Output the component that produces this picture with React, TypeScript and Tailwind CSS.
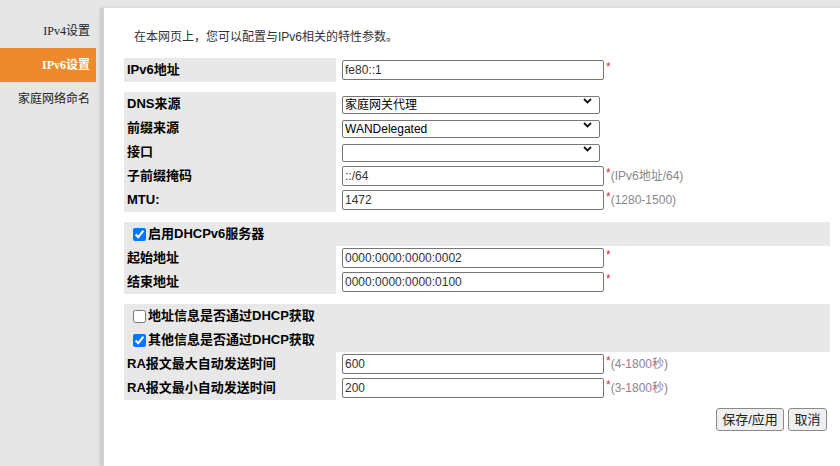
import React from 'react';

const labelCls =
  'w-[212px] shrink-0 bg-[#e8e8e8] pl-[3px] flex items-center font-bold text-[13px] text-black';

function Row({ label, children }: { label: string; children?: React.ReactNode }) {
  return (
    <div className="flex h-[24px]">
      <div className={labelCls}>{label}</div>
      <div className="flex items-center pl-[6px]">{children}</div>
    </div>
  );
}

function TextField({ value, hint, req = true }: { value: string; hint?: string; req?: boolean }) {
  return (
    <>
      <input
        defaultValue={value}
        className="w-[262px] h-[20px] border border-[#767676] rounded-[2px] bg-white pl-[2px] text-[12px] text-[#333] outline-none"
      />
      {req && <span className="ml-[2px] text-[12px] text-[#c33] self-start mt-[3px] leading-[12px]">*</span>}
      {hint && <span className="text-[12px] text-[#888]">{hint}</span>}
    </>
  );
}

function Select({ value }: { value: string }) {
  return (
    <div className="relative">
      <select
        defaultValue={value}
        className="appearance-none w-[258px] h-[18px] border border-[#767676] rounded-[2px] bg-white pl-[2px] text-[12px] leading-[16px] text-black outline-none"
      >
        <option value={value}>{value}</option>
      </select>
      <svg
        className="absolute right-[8px] top-[6px] pointer-events-none"
        width="9"
        height="6"
        viewBox="0 0 9 6"
      >
        <path d="M1 1 L4.5 4.5 L8 1" fill="none" stroke="#111" strokeWidth="1.8" />
      </svg>
    </div>
  );
}

function CheckRow({ label, checked }: { label: string; checked: boolean }) {
  return (
    <div className="flex items-center h-[24px] bg-[#e8e8e8] pl-[9px] gap-[2px] font-bold text-[13px] text-black">
      <input type="checkbox" defaultChecked={checked} className="w-[13px] h-[13px] m-0 accent-[#0075ff]" />
      <span>{label}</span>
    </div>
  );
}

export default function App() {
  const navItems = ['IPv4设置', 'IPv6设置', '家庭网络命名'];
  return (
    <div className="w-[840px] h-[466px] flex bg-[#e6e6e6] font-['Liberation_Sans','Noto_Sans_CJK_SC',sans-serif] overflow-hidden">
      {/* side menu */}
      <div className="w-[100px] shrink-0 pt-[14px] font-['Liberation_Serif','Noto_Sans_CJK_SC',serif] text-[12px]">
        {navItems.map((n, i) => (
          <div
            key={n}
            className={`w-[96px] h-[34px] flex items-center justify-end pr-[6px] ${
              i === 1 ? 'bg-[#ee8a2c] text-white font-bold' : 'text-[#222]'
            }`}
          >
            {n}
          </div>
        ))}
      </div>

      {/* content panel */}
      <div className="flex-1 mt-[8px] bg-white border-l-[4px] border-l-[#d0d0d0] shadow-[0_0_3px_rgba(0,0,0,0.12)] pt-[20px] pl-[20px] pr-[10px]">
        <div className="pl-[10px] text-[12px] leading-[18px] text-[#333] mb-[12px]">
          在本网页上，您可以配置与IPv6相关的特性参数。
        </div>

        <div className="flex flex-col gap-[10px]">
          <div>
            <Row label="IPv6地址">
              <TextField value="fe80::1" />
            </Row>
          </div>

          <div>
            <Row label="DNS来源">
              <Select value="家庭网关代理" />
            </Row>
            <Row label="前缀来源">
              <Select value="WANDelegated" />
            </Row>
            <Row label="接口">
              <Select value="" />
            </Row>
            <Row label="子前缀掩码">
              <TextField value="::/64" hint="(IPv6地址/64)" />
            </Row>
            <Row label="MTU:">
              <TextField value="1472" hint="(1280-1500)" />
            </Row>
          </div>

          <div>
            <CheckRow label="启用DHCPv6服务器" checked />
            <Row label="起始地址">
              <TextField value="0000:0000:0000:0002" />
            </Row>
            <Row label="结束地址">
              <TextField value="0000:0000:0000:0100" />
            </Row>
          </div>

          <div>
            <CheckRow label="地址信息是否通过DHCP获取" checked={false} />
            <CheckRow label="其他信息是否通过DHCP获取" checked />
            <Row label="RA报文最大自动发送时间">
              <TextField value="600" hint="(4-1800秒)" />
            </Row>
            <Row label="RA报文最小自动发送时间">
              <TextField value="200" hint="(3-1800秒)" />
            </Row>
          </div>
        </div>

        <div className="flex justify-end gap-[4px] mt-[8px] mr-[3px]">
          <button className="h-[23px] w-[68px] bg-[#efefef] border border-[#8a8a8a] rounded-[3px] text-[13px] text-[#222]">
            保存/应用
          </button>
          <button className="h-[23px] w-[39px] bg-[#efefef] border border-[#8a8a8a] rounded-[3px] text-[13px] text-[#222]">
            取消
          </button>
        </div>
      </div>
    </div>
  );
}
